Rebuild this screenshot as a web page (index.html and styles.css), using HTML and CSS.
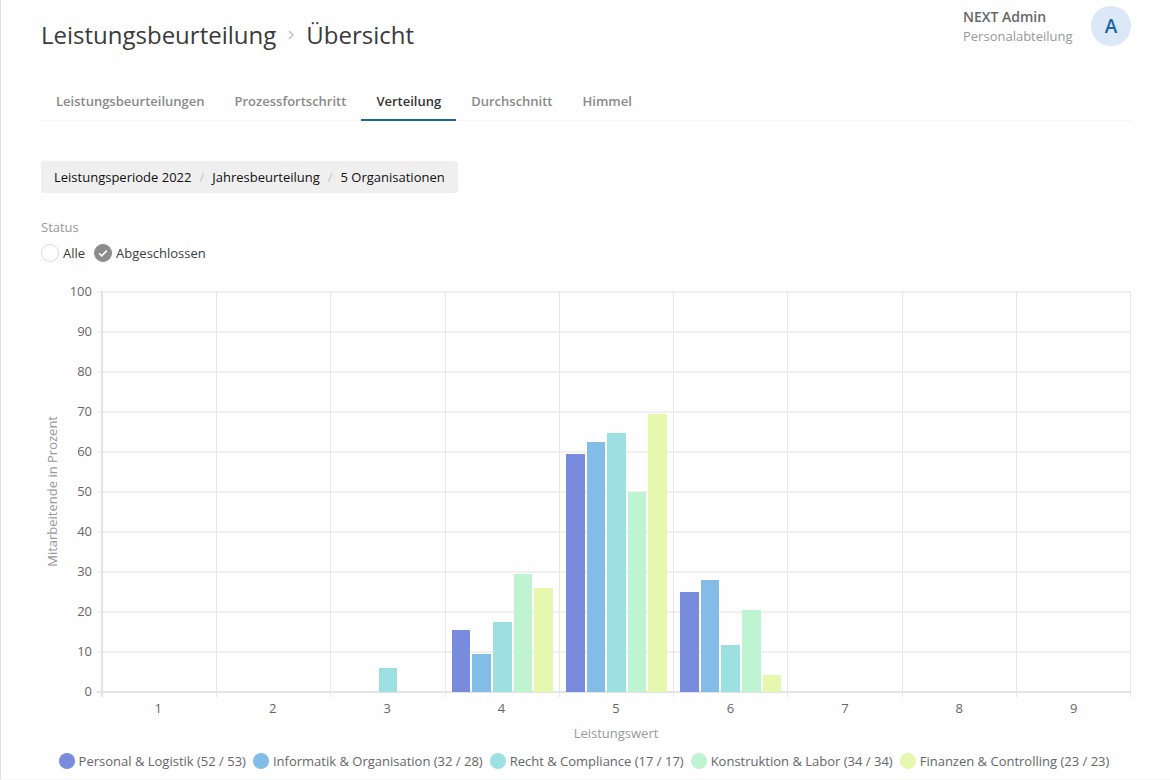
FILE: index.html
```html
<!DOCTYPE html>
<html lang="de">
<head>
<meta charset="utf-8">
<meta name="viewport" content="width=device-width, initial-scale=1">
<title>Leistungsbeurteilung – Übersicht</title>
<link rel="stylesheet" href="styles.css">
</head>
<body>
<div class="page">
  <header class="header">
    <h1 class="title">
      <span>Leistungsbeurteilung</span>
      <svg class="chevron" viewBox="0 0 6 10" aria-hidden="true"><path d="M1 1.200l4 3.800-4 3.800" fill="none" stroke="currentColor" stroke-width="1.700"/></svg>
      <span>Übersicht</span>
    </h1>
    <div class="user">
      <div class="user-text">
        <div class="user-name">NEXT Admin</div>
        <div class="user-role">Personalabteilung</div>
      </div>
      <div class="avatar">A</div>
    </div>
  </header>

  <nav class="tabs">
    <a class="tab" href="#">Leistungsbeurteilungen</a>
    <a class="tab" href="#">Prozessfortschritt</a>
    <a class="tab tab-active" href="#" aria-current="page">Verteilung</a>
    <a class="tab" href="#">Durchschnitt</a>
    <a class="tab" href="#">Himmel</a>
  </nav>

  <button class="filter" type="button">
    <span>Leistungsperiode 2022</span><span class="slash">/</span><span>Jahresbeurteilung</span><span class="slash">/</span><span>5 Organisationen</span>
  </button>

  <fieldset class="status">
    <legend class="status-title">Status</legend>
    <div class="options">
      <label class="option"><input class="radio" type="radio" name="status"><span>Alle</span></label>
      <label class="option">
        <input class="radio" type="radio" name="status" checked>
        <svg class="check" viewBox="0 0 18 18" aria-hidden="true"><path d="M5.200 9.400l2.600 2.400 5-5.200" fill="none" stroke="#fff" stroke-width="1.600"/></svg>
        <span>Abgeschlossen</span>
      </label>
    </div>
  </fieldset>

  <section class="chart" aria-label="Verteilung der Leistungswerte">
    <div class="y-title"><span>Mitarbeitende in Prozent</span></div>
    <div class="y-axis">
      <span>100</span><span>90</span><span>80</span><span>70</span><span>60</span><span>50</span><span>40</span><span>30</span><span>20</span><span>10</span><span>0</span>
    </div>
    <div class="plot">
      <div class="lines"><i></i><i></i><i></i><i></i><i></i><i></i><i></i><i></i><i></i><i></i></div>
      <div class="groups">
        <div class="group"></div>
        <div class="group"></div>
        <div class="group">
          <div class="bar"></div>
          <div class="bar"></div>
          <div class="bar recht" style="height:5.9%"></div>
          <div class="bar"></div>
          <div class="bar"></div>
        </div>
        <div class="group">
          <div class="bar personal" style="height:15.4%"></div>
          <div class="bar informatik" style="height:9.4%"></div>
          <div class="bar recht" style="height:17.6%"></div>
          <div class="bar konstruktion" style="height:29.4%"></div>
          <div class="bar finanzen" style="height:26.1%"></div>
        </div>
        <div class="group">
          <div class="bar personal" style="height:59.6%"></div>
          <div class="bar informatik" style="height:62.5%"></div>
          <div class="bar recht" style="height:64.7%"></div>
          <div class="bar konstruktion" style="height:50%"></div>
          <div class="bar finanzen" style="height:69.6%"></div>
        </div>
        <div class="group">
          <div class="bar personal" style="height:25%"></div>
          <div class="bar informatik" style="height:28.1%"></div>
          <div class="bar recht" style="height:11.8%"></div>
          <div class="bar konstruktion" style="height:20.6%"></div>
          <div class="bar finanzen" style="height:4.3%"></div>
        </div>
        <div class="group"></div>
        <div class="group"></div>
        <div class="group"></div>
      </div>
    </div>
    <div class="x-axis">
      <span>1</span><span>2</span><span>3</span><span>4</span><span>5</span><span>6</span><span>7</span><span>8</span><span>9</span>
    </div>
    <div class="x-title">Leistungswert</div>
  </section>

  <ul class="legend">
    <li class="key"><i class="dot personal"></i>Personal &amp; Logistik (52 / 53)</li>
    <li class="key"><i class="dot informatik"></i>Informatik &amp; Organisation (32 / 28)</li>
    <li class="key"><i class="dot recht"></i>Recht &amp; Compliance (17 / 17)</li>
    <li class="key"><i class="dot konstruktion"></i>Konstruktion &amp; Labor (34 / 34)</li>
    <li class="key"><i class="dot finanzen"></i>Finanzen &amp; Controlling (23 / 23)</li>
  </ul>
</div>
</body>
</html>
```

FILE: styles.css
```css
* {
  box-sizing: border-box;
}

body {
  margin: 0;
  background: #fefefe;
  color: #3c3c3c;
  font-family: "Open Sans", "Noto Sans", sans-serif;
  font-size: 13px;
  line-height: 20px;
}

.page {
  min-height: 100vh;
  padding: 6px 39px 0 40px;
  border-left: 1px solid #e2e2e2;
  border-bottom: 1px solid #f7f7f7;
}

.header {
  display: flex;
  justify-content: space-between;
  align-items: flex-start;
  height: 76px;
}

.title {
  display: flex;
  align-items: center;
  gap: 12px;
  margin: 13px 0 0;
  font-size: 24px;
  font-weight: 400;
  line-height: 32px;
  color: #3a3a3a;
}

.chevron {
  width: 6px;
  height: 10px;
  color: #c8c8c8;
}

.user {
  display: flex;
  gap: 16px;
}

.user-text {
  min-width: 112px;
  padding-top: 1px;
}

.user-name {
  font-size: 14px;
  font-weight: 600;
  line-height: 19px;
  color: #666;
}

.user-role {
  color: #999;
}

.avatar {
  width: 40px;
  height: 40px;
  border-radius: 50%;
  background: #dae8f8;
  color: #1c65a3;
  font-size: 19px;
  font-weight: 600;
  line-height: 40px;
  text-align: center;
}

.tabs {
  display: flex;
  border-bottom: 1px solid #f5f5f5;
}

.tab {
  margin-bottom: -1px;
  padding: 9px 15px 8px;
  border-bottom: 2px solid transparent;
  color: #8a8a8a;
  font-weight: 600;
  text-decoration: none;
}

.tab-active {
  border-color: #1b6887;
  color: #333;
}

.filter {
  display: flex;
  gap: 8px;
  margin: 40px 0 0;
  padding: 6px 13px;
  border: 0;
  border-radius: 3px;
  background: #efefef;
  color: #111;
  font: inherit;
}

.slash {
  color: #c4c4c4;
}

.status {
  margin: 24px 0 0;
  padding: 0;
  border: 0;
}

.status-title {
  padding: 0;
  color: #999;
}

.options {
  display: flex;
  gap: 9px;
  margin-top: 6px;
}

.option {
  display: grid;
  grid-template-columns: 18px auto;
  align-items: center;
  column-gap: 4px;
}

.radio,
.check {
  grid-area: 1 / 1;
  width: 18px;
  height: 18px;
}

.radio {
  appearance: none;
  margin: 0;
  border: 1px solid #dcdcdc;
  border-radius: 50%;
  background: #fff;
}

.radio:checked {
  border-color: #8c8c8c;
  background: #8c8c8c;
}

.check {
  pointer-events: none;
}

.chart {
  display: grid;
  grid-template-columns: 22px 29px 1fr;
  margin-top: 8px;
  color: #666;
}

.y-title {
  display: flex;
  align-items: center;
  justify-content: center;
  color: #999;
}

.y-title span {
  writing-mode: vertical-rl;
  transform: rotate(180deg);
}

.y-axis {
  display: grid;
  grid-auto-rows: 40px;
  align-items: center;
  text-align: right;
}

.plot {
  display: grid;
  height: 402px;
  margin: 20px 0 0 9px;
}

.lines,
.groups {
  grid-area: 1 / 1;
  display: grid;
}

.lines {
  grid-template-rows: repeat(10, 1fr);
  margin-left: -4px;
  border-bottom: 2px solid #e4e4e4;
}

.lines i {
  border-top: 2px solid #f0f0f0;
}

.groups {
  grid-template-columns: repeat(9, 1fr);
  margin: 0 0 -4px;
  border-left: 2px solid #e4e4e4;
}

.group {
  display: grid;
  grid-template-columns: repeat(5, 1fr);
  align-items: end;
  column-gap: 2px;
  padding: 1px 6px 5px;
  border-right: 1px solid #e6e6e6;
}

.personal {
  background: #798bdc;
}

.informatik {
  background: #84bce8;
}

.recht {
  background: #9ce0e2;
}

.konstruktion {
  background: #bff4d2;
}

.finanzen {
  background: #e6f8ae;
}

.x-axis {
  grid-column: 3;
  display: grid;
  grid-template-columns: repeat(9, 1fr);
  margin: -13px 0 0 9px;
  text-align: center;
}

.x-title {
  grid-column: 3;
  margin: 5px 0 0 9px;
  color: #999;
  text-align: center;
}

.legend {
  display: flex;
  flex-wrap: wrap;
  justify-content: center;
  gap: 7px;
  margin: 8px 0 0;
  padding: 0 4px 0 0;
  color: #666;
  list-style: none;
}

.key {
  display: flex;
  align-items: center;
  gap: 4px;
}

.dot {
  width: 16px;
  height: 16px;
  border-radius: 50%;
}
```
